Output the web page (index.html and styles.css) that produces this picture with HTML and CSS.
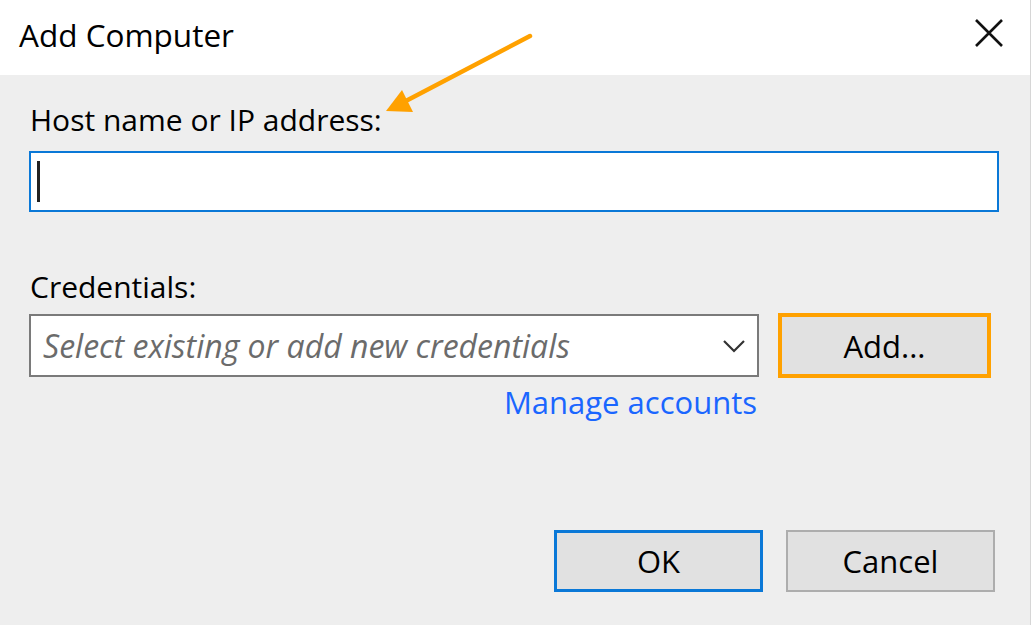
FILE: index.html
```html
<!DOCTYPE html>
<html>
<head>
<meta charset="utf-8">
<link rel="stylesheet" href="styles.css">
</head>
<body>
<div class="dialog">
  <div class="titlebar">
    <span class="title">Add Computer</span>
    <span class="close">
      <svg width="30" height="30" viewBox="0 0 30 30"><path d="M2 2 L28 28 M28 2 L2 28" stroke="#111" stroke-width="2.6" fill="none"/></svg>
    </span>
  </div>
  <div class="content">
    <div class="label first">Host name or IP address:</div>
    <div class="textbox"><span class="caret"></span></div>
    <div class="label second">Credentials:</div>
    <div class="cred-row">
      <div class="combo">
        <span class="placeholder">Select existing or add new credentials</span>
        <svg class="chev" width="24" height="14" viewBox="0 0 24 14"><path d="M2 2 L12 12 L22 2" stroke="#333" stroke-width="2.2" fill="none"/></svg>
      </div>
      <div class="btn add">Add...</div>
    </div>
    <div class="link-row"><span class="link">Manage accounts</span></div>
    <div class="actions">
      <div class="btn ok">OK</div>
      <div class="btn cancel">Cancel</div>
    </div>
  </div>
  <svg class="arrow" width="1031" height="625" viewBox="0 0 1031 625">
    <line x1="530" y1="36" x2="402" y2="103" stroke="#ffa100" stroke-width="4.5" stroke-linecap="round"/>
    <polygon points="386,111 402,90 413,112" fill="#ffa100"/>
  </svg>
</div>
</body>
</html>
```

FILE: styles.css
```css
* { box-sizing: border-box; }
html, body { margin: 0; padding: 0; }
body {
  width: 1031px;
  height: 625px;
  overflow: hidden;
  font-family: "Open Sans", "Noto Sans", sans-serif;
  color: #000;
  background: #eeeeee;
}
.dialog {
  position: relative;
  width: 1031px;
  height: 625px;
  display: flex;
  flex-direction: column;
  border-right: 1px solid #d6d6d6;
}
.titlebar {
  height: 75px;
  background: #fff;
  display: flex;
  align-items: center;
  justify-content: space-between;
  padding: 0 26px 0 19px;
}
.title {
  font-size: 31.5px;
  margin-top: -6px;
}
.close { display: flex; margin-top: -10px; }
.content {
  flex: 1;
  background: #eeeeee;
  display: flex;
  flex-direction: column;
  padding: 0 32px 0 29px;
}
.label {
  font-size: 30px;
  line-height: 36px;
  padding-left: 1px;
}
.label.first { margin-top: 27px; }
.label.second { margin-top: 57px; }
.textbox {
  margin-top: 13px;
  width: 970px;
  height: 61px;
  background: #fff;
  border: 2.5px solid #0a78d7;
  display: flex;
  align-items: center;
  padding-left: 6px;
}
.caret {
  width: 3px;
  height: 41px;
  background: #222;
}
.cred-row {
  margin-top: 8px;
  display: flex;
  align-items: center;
  gap: 19px;
}
.combo {
  width: 730px;
  height: 63px;
  background: #fff;
  border: 2.5px solid #7a7a7a;
  display: flex;
  align-items: center;
  justify-content: space-between;
  padding: 0 11px 0 12px;
}
.placeholder {
  font-style: italic;
  font-size: 32px;
  color: #6b6b6b;
}
.btn {
  display: flex;
  align-items: center;
  justify-content: center;
  background: #e1e1e1;
  font-size: 31px;
}
.add {
  width: 213px;
  height: 65px;
  border: 4px solid #ffa100;
}
.link-row {
  display: flex;
  justify-content: flex-end;
  width: 730px;
  margin-top: 6px;
}
.link {
  font-size: 31px;
  line-height: 36px;
  color: #1a66ff;
  margin-right: 2px;
}
.actions {
  margin-top: 110px;
  display: flex;
  justify-content: flex-end;
  gap: 23px;
  padding-right: 3px;
}
.ok {
  width: 209px;
  height: 62px;
  border: 3.5px solid #0a78d7;
}
.cancel {
  width: 209px;
  height: 62px;
  border: 2.5px solid #adadad;
}
.arrow {
  position: absolute;
  left: 0;
  top: 0;
  pointer-events: none;
}
```
